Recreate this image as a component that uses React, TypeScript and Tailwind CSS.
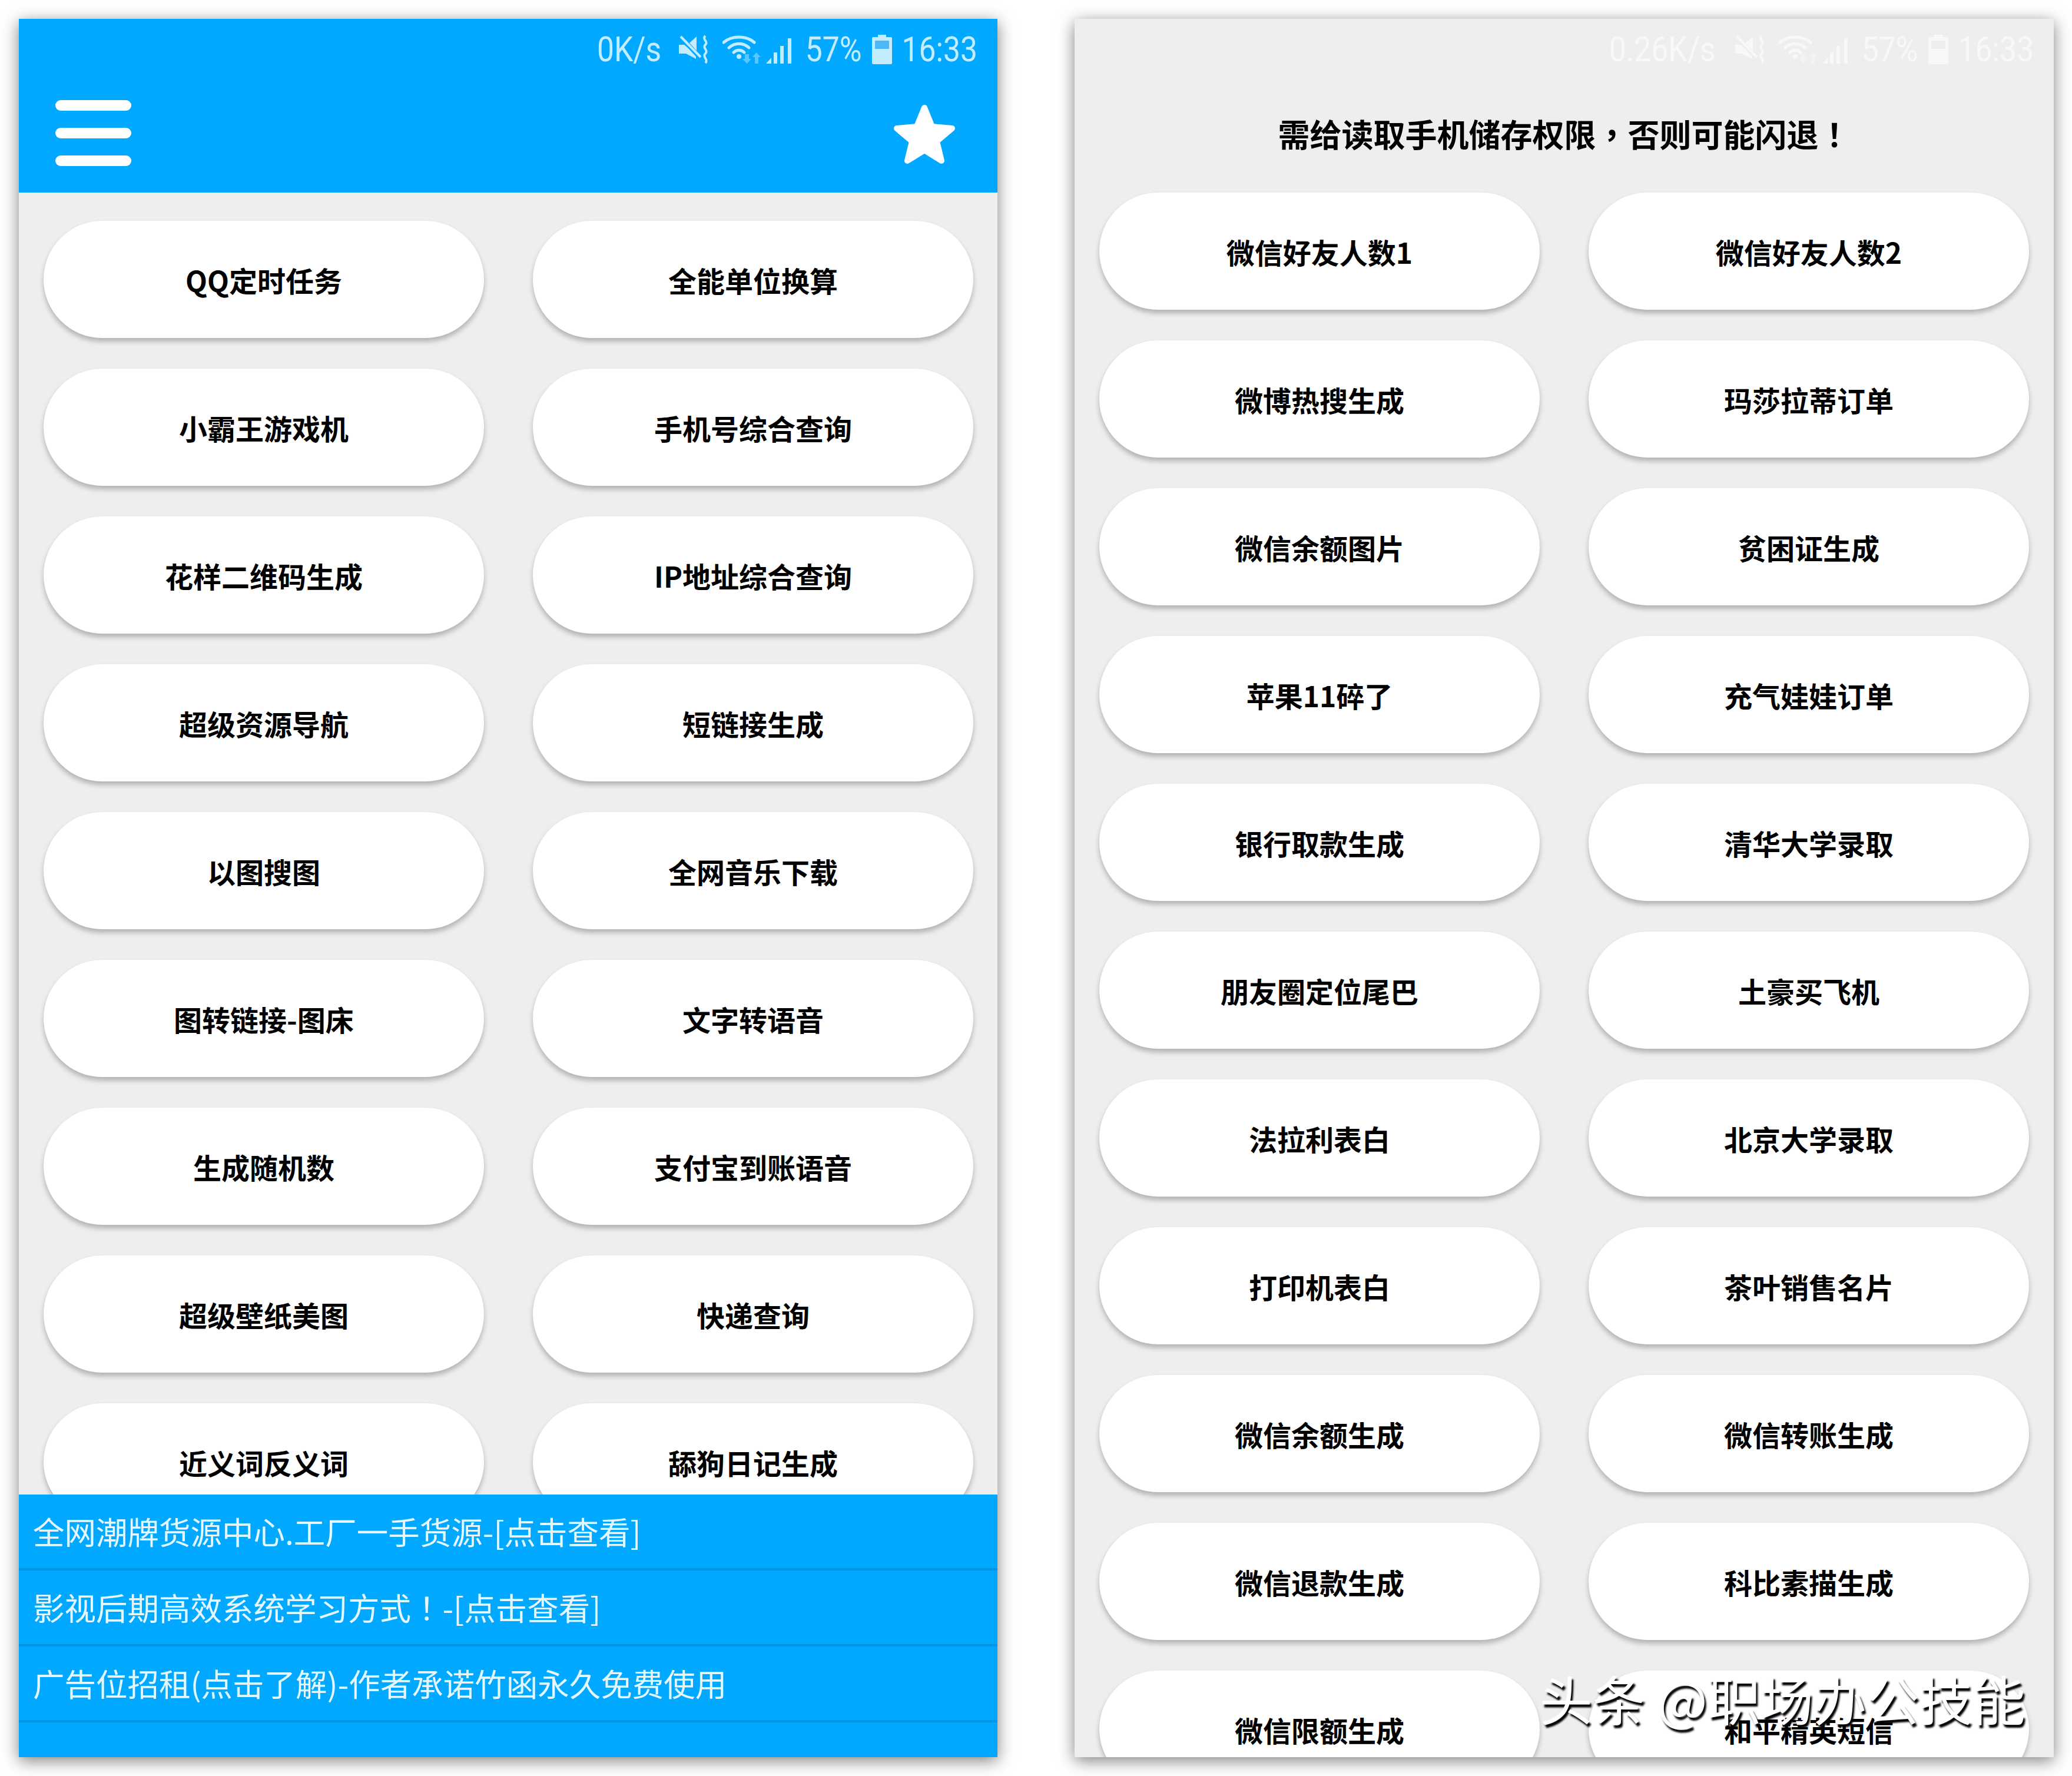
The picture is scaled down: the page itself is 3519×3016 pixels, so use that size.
import React from 'react';

const leftTools = [
  'QQ定时任务', '全能单位换算',
  '小霸王游戏机', '手机号综合查询',
  '花样二维码生成', 'IP地址综合查询',
  '超级资源导航', '短链接生成',
  '以图搜图', '全网音乐下载',
  '图转链接-图床', '文字转语音',
  '生成随机数', '支付宝到账语音',
  '超级壁纸美图', '快递查询',
  '近义词反义词', '舔狗日记生成',
];

const rightTools = [
  '微信好友人数1', '微信好友人数2',
  '微博热搜生成', '玛莎拉蒂订单',
  '微信余额图片', '贫困证生成',
  '苹果11碎了', '充气娃娃订单',
  '银行取款生成', '清华大学录取',
  '朋友圈定位尾巴', '土豪买飞机',
  '法拉利表白', '北京大学录取',
  '打印机表白', '茶叶销售名片',
  '微信余额生成', '微信转账生成',
  '微信退款生成', '科比素描生成',
  '微信限额生成', '和平精英短信',
];

// centred fullwidth punctuation, as on the phone
const Punct = ({ children }: { children: string }) => (
  <span className="font-['Noto_Sans_CJK_TC',sans-serif]">{children}</span>
);

const ads = [
  <>全网潮牌货源中心.工厂一手货源-[点击查看]</>,
  <>影视后期高效系统学习方式<Punct>！</Punct>-[点击查看]</>,
  <>广告位招租(点击了解)-作者承诺竹函永久免费使用</>,
];

const MuteIcon = () => (
  <svg width="54" height="50" viewBox="0 0 54 50" fill="none">
    <path d="M1 17h9l6 5 14 15v4L13 32H1z" fill="currentColor" />
    <path d="M19 14 31 3v24z" fill="currentColor" />
    <path d="M4 3 38 38" stroke="currentColor" strokeWidth="4" />
    <path d="M46 2c-7 6 6 9 0 15s6 9 0 15 6 10 0 16" stroke="currentColor" strokeWidth="4" />
  </svg>
);

const WifiIcon = () => (
  <svg width="66" height="50" viewBox="0 0 66 50" fill="none">
    <path d="M2 13C16 1 40 1 54 13" stroke="currentColor" strokeWidth="5" strokeLinecap="round" />
    <path d="M11 22C21 13 35 13 45 22" stroke="currentColor" strokeWidth="5" strokeLinecap="round" />
    <path d="M19 30C24 25 32 25 37 30" stroke="currentColor" strokeWidth="5" strokeLinecap="round" />
    <circle cx="28" cy="37" r="4" fill="currentColor" />
    <path d="M38 33h7v8h4l-7.500 8-7.500-8h4z" fill="currentColor" opacity="0.45" />
    <path d="M55 49v-11h-4l6.500-8 7.500 8h-4v11z" fill="currentColor" opacity="0.45" />
  </svg>
);

const SignalIcon = () => (
  <svg width="48" height="44" viewBox="0 0 48 44" fill="currentColor">
    <path d="M0 44 9 34v10z" />
    <rect x="13" y="25" width="6" height="19" />
    <rect x="24" y="14" width="6" height="30" />
    <rect x="37" y="1" width="6" height="43" />
  </svg>
);

const BatteryIcon = ({ level }: { level: string }) => (
  <svg width="34" height="50" viewBox="0 0 34 50" fill="currentColor">
    <path d="M10 0h14v4h8a2 2 0 0 1 2 2v42a2 2 0 0 1-2 2H2a2 2 0 0 1-2-2V6a2 2 0 0 1 2-2h8z" />
    <rect x="5" y="10" width="24" height="14" fill={level} />
  </svg>
);

const StatusBar = ({ speed, speedWidth, color, level }: { speed: string; speedWidth: string; color: string; level: string }) => (
  <div className={`flex items-center justify-end h-[70px] mt-[17px] pr-[36px] font-['Roboto',sans-serif] text-[60px] leading-none ${color}`}>
    <span className={`${speedWidth} flex justify-center`}>
      <span className="scale-x-[0.86] whitespace-nowrap">{speed}</span>
    </span>
    <span className="ml-[30px]"><MuteIcon /></span>
    <span className="ml-[21px]"><WifiIcon /></span>
    <span className="ml-[8px] mt-[4px]"><SignalIcon /></span>
    <span className="w-[92px] ml-[21px] flex justify-center">
      <span className="scale-x-[0.86]">57%</span>
    </span>
    <span className="ml-[19px]"><BatteryIcon level={level} /></span>
    <span className="w-[125px] ml-[18px] flex justify-center">
      <span className="scale-x-[0.86]">16:33</span>
    </span>
  </div>
);

const ToolGrid = ({ items, top }: { items: string[]; top: string }) => (
  <div className={`grid grid-cols-[748px_748px] gap-x-[83px] gap-y-[52px] pl-[42px] ${top}`}>
    {items.map((name) => (
      <div
        key={name}
        className="h-[199px] rounded-full bg-white flex items-center justify-center font-bold text-[48px] text-black shadow-[0_6px_9px_rgba(0,0,0,0.25)]"
      >
        {name}
      </div>
    ))}
  </div>
);

export default function App() {
  return (
    <div className="w-[3519px] h-[3016px] bg-white flex gap-[131px] pl-[32px] pt-[32px] font-['Noto_Sans_CJK_SC','Noto_Sans',sans-serif]">
      {/* left phone */}
      <div className="w-[1662px] h-[2952px] flex flex-col bg-[#eeeeee] shadow-[0_6px_26px_rgba(0,0,0,0.5)]">
        <div className="h-[295px] shrink-0 bg-[#00a8ff]">
          <StatusBar speed="0K/s" speedWidth="w-[106px]" color="text-[#c4ecff]" level="#4db8f5" />
          <div className="flex items-start justify-between pl-[62px] pr-[71px] mt-[51px]">
            <div className="flex flex-col gap-[29px]">
              <div className="w-[129px] h-[18px] rounded-full bg-white" />
              <div className="w-[129px] h-[18px] rounded-full bg-white" />
              <div className="w-[129px] h-[18px] rounded-full bg-white" />
            </div>
            <svg width="106" height="102" viewBox="0 0 106 102" className="mt-[7px]">
              <path
                d="M53 6 66 38 100 41 74 63 82 96 53 78 24 96 32 63 6 41 40 38Z"
                fill="#ffffff"
                stroke="#ffffff"
                strokeWidth="10"
                strokeLinejoin="round"
              />
            </svg>
          </div>
        </div>
        <div className="flex-1 min-h-0 overflow-hidden">
          <ToolGrid items={leftTools} top="pt-[48px]" />
        </div>
        <div className="h-[446px] shrink-0 bg-[#00a8ff] text-[53.5px] text-[#e4f7ff]">
          {ads.map((ad, i) => (
            <div key={i} className="h-[129px] flex items-center pl-[24px] border-b-[4px] border-[#0095e2] whitespace-nowrap">
              <span>{ad}</span>
            </div>
          ))}
        </div>
      </div>

      {/* right phone */}
      <div className="relative w-[1663px] h-[2952px] flex flex-col bg-[#eeeeee] shadow-[0_6px_26px_rgba(0,0,0,0.5)]">
        <div className="h-[245px] shrink-0">
          <StatusBar speed="0.26K/s" speedWidth="w-[185px]" color="text-[#f8f8f8]" level="#eeeeee" />
          <div className="text-center font-bold text-[54px] leading-none text-black mt-[81px]">
            需给读取手机储存权限<Punct>，</Punct>否则可能闪退<Punct>！</Punct>
          </div>
        </div>
        <div className="flex-1 min-h-0 overflow-hidden">
          <ToolGrid items={rightTools} top="pt-[50px]" />
        </div>
        <div className="absolute right-[48px] bottom-[56px] text-[90px] leading-none text-white whitespace-nowrap [text-shadow:3px_5px_3px_#000000]">
          头条 @职场办公技能
        </div>
      </div>
    </div>
  );
}
